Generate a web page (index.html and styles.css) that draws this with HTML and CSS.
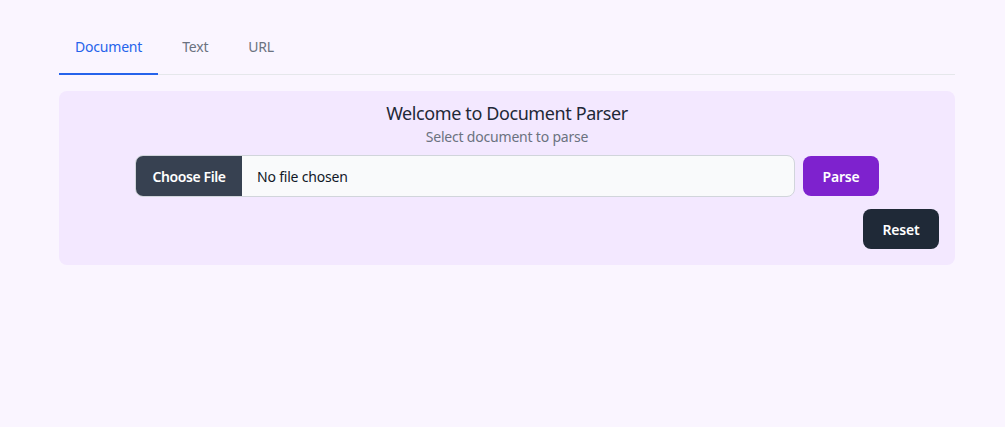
FILE: index.html
```html
<!DOCTYPE html>
<html lang="en">
<head>
<meta charset="utf-8">
<title>Document Parser</title>
<link rel="stylesheet" href="styles.css">
</head>
<body>
<div class="page">
  <nav class="tabs">
    <div class="tab active">Document</div>
    <div class="tab">Text</div>
    <div class="tab">URL</div>
  </nav>
  <section class="card">
    <h1 class="title">Welcome to Document Parser</h1>
    <p class="subtitle">Select document to parse</p>
    <div class="row">
      <div class="file">
        <span class="file-btn">Choose File</span>
        <span class="file-name">No file chosen</span>
      </div>
      <button class="btn parse">Parse</button>
    </div>
    <div class="actions">
      <button class="btn reset">Reset</button>
    </div>
  </section>
</div>
</body>
</html>
```

FILE: styles.css
```css
* { box-sizing: border-box; }
html, body { margin: 0; padding: 0; }
body {
  background: #faf5ff;
  font-family: "Noto Sans", "Open Sans", sans-serif;
  color: #111827;
  height: 427px;
}
.page {
  padding: 23px 50px 0 59px;
}
.tabs {
  display: flex;
  gap: 8px;
  border-bottom: 1px solid #e5e7eb;
}
.tab {
  padding: 14px 16px 16px;
  font-size: 14px;
  line-height: 20px;
  letter-spacing: -0.2px;
  color: #6b7280;
  border-bottom: 2px solid transparent;
  margin-bottom: -1px;
}
.tab.active {
  color: #2563eb;
  border-bottom-color: #2563eb;
}
.card {
  margin-top: 16px;
  background: #f3e8ff;
  border-radius: 8px;
  padding: 8px 16px 16px;
  display: flex;
  flex-direction: column;
  align-items: center;
}
.title {
  margin: 0;
  font-size: 18px;
  line-height: 28px;
  font-weight: 400;
  letter-spacing: -0.4px;
  color: #1f2937;
}
.subtitle {
  margin: 0;
  font-size: 14px;
  line-height: 20px;
  letter-spacing: -0.2px;
  color: #6b7280;
}
.row {
  margin-top: 8px;
  display: flex;
  gap: 8px;
  align-items: center;
}
.file {
  width: 660px;
  height: 42px;
  display: flex;
  align-items: stretch;
  border: 1px solid #d1d5db;
  border-radius: 8px;
  background: #f9fafb;
  overflow: hidden;
  font-size: 14px;
}
.file-btn {
  flex: 0 0 106px;
  background: #374151;
  color: #fff;
  font-weight: 600;
  white-space: nowrap;
  display: flex;
  align-items: center;
  justify-content: center;
  letter-spacing: -0.4px;
}
.file-name {
  display: flex;
  align-items: center;
  padding-left: 15px;
  letter-spacing: -0.2px;
  color: #111827;
}
.btn {
  font-family: inherit;
  border: none;
  border-radius: 8px;
  color: #fff;
  font-size: 14px;
  font-weight: 600;
  letter-spacing: -0.2px;
  width: 76px;
  height: 40px;
  padding: 0;
}
.parse { background: #7e22ce; }
.actions {
  align-self: stretch;
  display: flex;
  justify-content: flex-end;
  margin-top: 12px;
}
.reset { background: #1f2937; }
```
